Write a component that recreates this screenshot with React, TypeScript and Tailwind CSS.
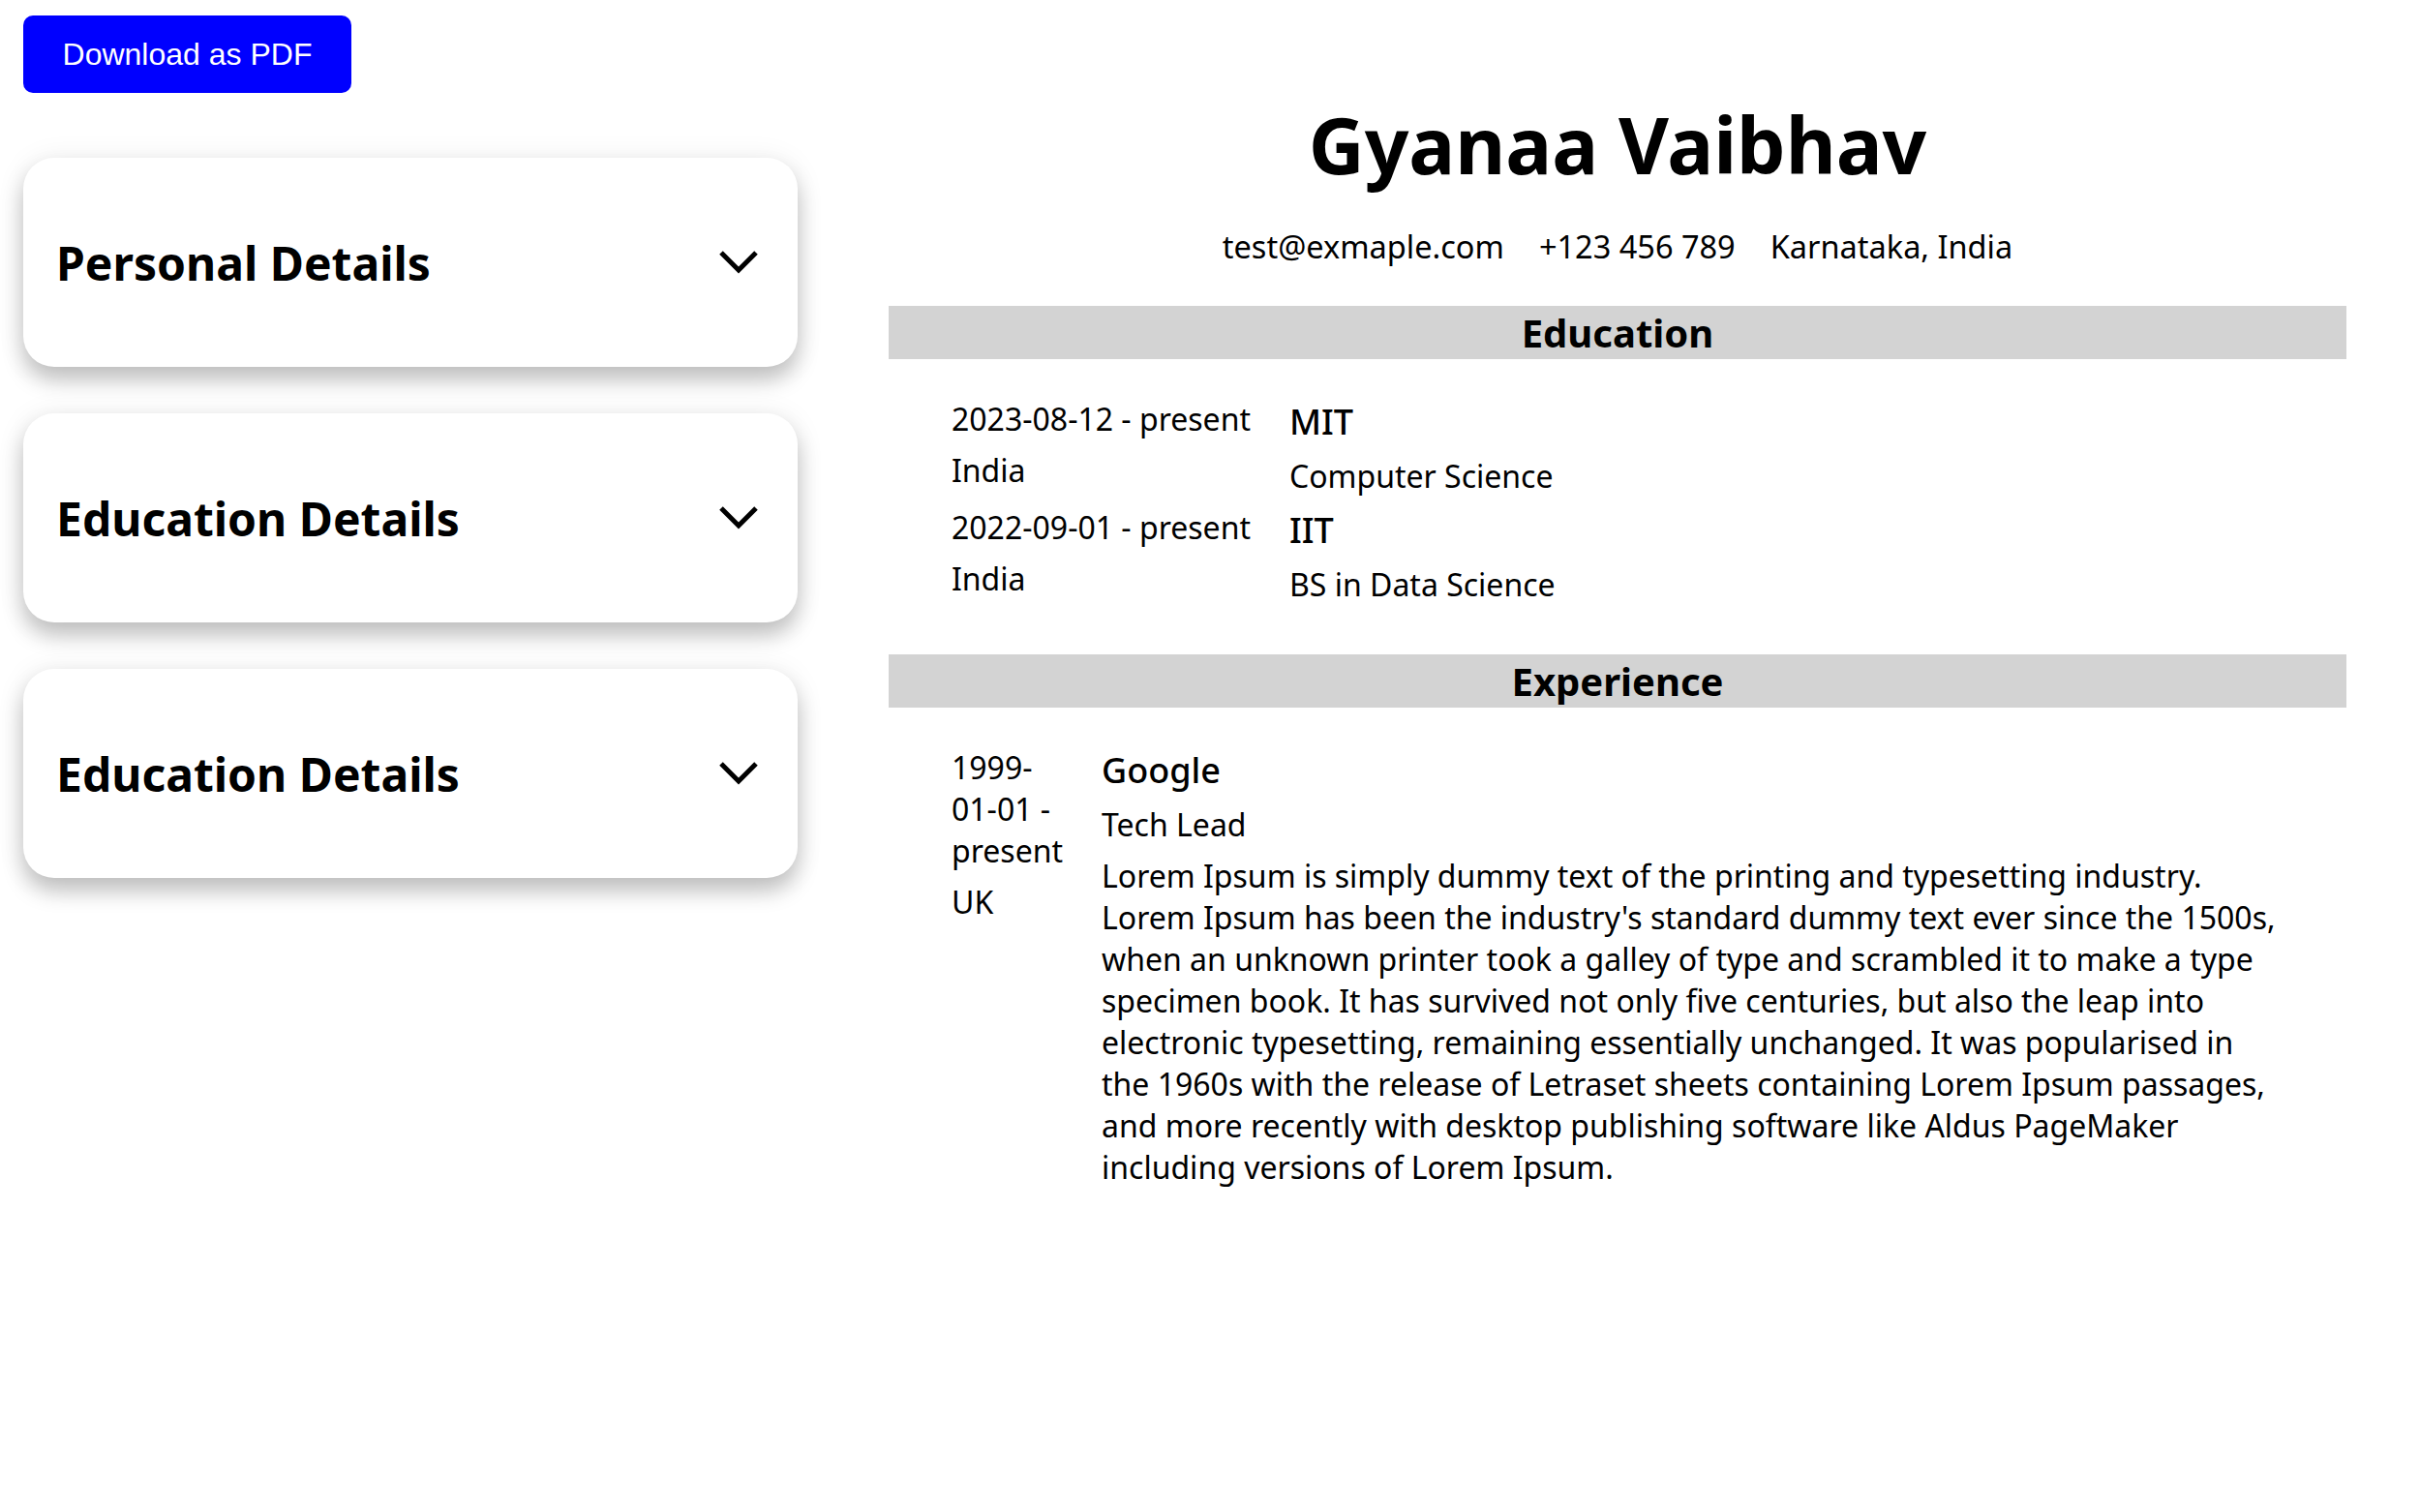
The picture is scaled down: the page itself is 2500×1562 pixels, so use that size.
import React from "react";

function Chevron() {
  return (
    <svg width="42" height="26" viewBox="0 0 42 26" fill="none" aria-hidden="true">
      <polyline points="3,3 21,21 39,3" stroke="#000" strokeWidth="5" strokeLinecap="butt" strokeLinejoin="miter" fill="none" />
    </svg>
  );
}

function Card({ title }: { title: string }) {
  return (
    <div className="flex h-[216px] w-[800px] items-center justify-between rounded-[32px] bg-white pl-[34px] pr-[40px] shadow-[0_14px_22px_rgba(0,0,0,0.22),0_2px_30px_rgba(0,0,0,0.08)]">
      <h3 className="text-[48px] font-bold leading-[normal]">{title}</h3>
      <Chevron />
    </div>
  );
}

export default function App() {
  const education = [
    { date: "2023-08-12 - present", place: "India", school: "MIT", degree: "Computer Science" },
    { date: "2022-09-01 - present", place: "India", school: "IIT", degree: "BS in Data Science" },
  ];
  return (
    <div className="flex min-h-screen bg-white font-['Noto_Sans',sans-serif] text-black">
      <div className="w-[824px] shrink-0 pl-[24px] pt-[16px]">
        <button className="h-[80px] w-[339px] rounded-[10px] bg-[#0000ff] font-['Liberation_Sans',Arial,sans-serif] text-[32px] leading-[normal] text-white">
          Download as PDF
        </button>
        <div className="mt-[67px] flex flex-col gap-[48px]">
          <Card title="Personal Details" />
          <Card title="Education Details" />
          <Card title="Education Details" />
        </div>
      </div>

      <div className="ml-[94px] w-[1506px] shrink-0 pt-[94px]">
        <h1 className="text-center text-[80px] font-bold leading-[normal]">Gyanaa Vaibhav</h1>
        <div className="mt-[29px] flex justify-center gap-[36px] text-[32.5px] leading-[normal]">
          <span>test@exmaple.com</span>
          <span>+123 456 789</span>
          <span>Karnataka, India</span>
        </div>

        <section className="mt-[39px]">
          <h2 className="bg-[#d3d3d3] text-center text-[40px] font-bold leading-[normal]">Education</h2>
          <div className="flex flex-col gap-[10px] px-[65px] pt-[40px]">
            {education.map((e, i) => (
              <div key={i} className="flex gap-[40px]">
                <div className="flex flex-col gap-[10px] text-[32px] leading-[normal]">
                  <p>{e.date}</p>
                  <p>{e.place}</p>
                </div>
                <div className="flex flex-auto flex-col gap-[10px]">
                  <h3 className="text-[36px] font-medium leading-[normal]">{e.school}</h3>
                  <p className="text-[32px] leading-[normal]">{e.degree}</p>
                </div>
              </div>
            ))}
          </div>
        </section>

        <section className="mt-[51px]">
          <h2 className="bg-[#d3d3d3] text-center text-[40px] font-bold leading-[normal]">Experience</h2>
          <div className="flex flex-col gap-[11px] px-[65px] pt-[40px]">
            <div className="flex gap-[40px]">
              <div className="flex flex-col gap-[10px] text-[32px] leading-[normal]">
                <p>
                  1999-<wbr />01-01 - present
                </p>
                <p>UK</p>
              </div>
              <div className="flex flex-auto flex-col gap-[10px]">
                <h3 className="text-[36px] font-medium leading-[normal]">Google</h3>
                <p className="text-[32px] leading-[normal]">Tech Lead</p>
                <p className="text-[32px] leading-[normal]">
                  Lorem Ipsum is simply dummy text of the printing and typesetting industry. Lorem Ipsum has been the
                  industry's standard dummy text ever since the 1500s, when an unknown printer took a galley of type and
                  scrambled it to make a type specimen book. It has survived not only five centuries, but also the leap
                  into electronic typesetting, remaining essentially unchanged. It was popularised in the 1960s with the
                  release of Letraset sheets containing Lorem Ipsum passages, and more recently with desktop publishing
                  software like Aldus PageMaker including versions of Lorem Ipsum.
                </p>
              </div>
            </div>
          </div>
        </section>
      </div>
    </div>
  );
}
